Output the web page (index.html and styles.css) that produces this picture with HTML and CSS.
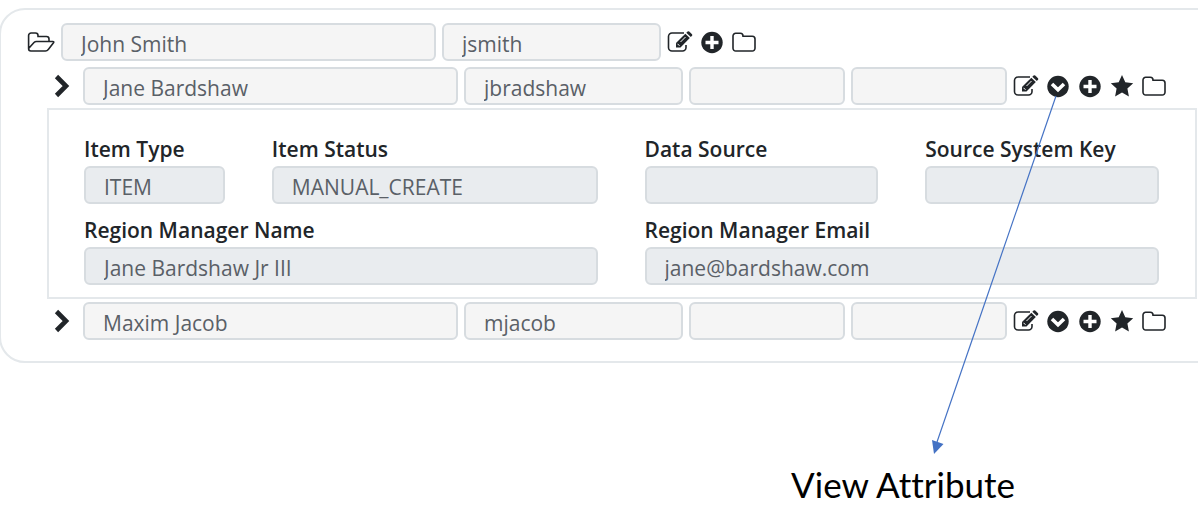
FILE: index.html
```html
<!DOCTYPE html>
<html lang="en">
<head>
    <meta charset="UTF-8">
    <meta name="viewport" content="width=device-width, initial-scale=1.0">
    <title>Item Hierarchy</title>
    <link rel="stylesheet" href="styles.css">
</head>
<body>
    <svg class="sprite" aria-hidden="true">
        <symbol id="edit" viewBox="0 0 26 24">
            <path d="M17 3H5a3.500 3.500 0 0 0-3.500 3.500v11A3.500 3.500 0 0 0 5 21h10.500a3.500 3.500 0 0 0 3.500-3.500V15" fill="none" stroke="currentColor" stroke-width="1.600"/>
            <path d="M9 17.500v-4.500L18.300 3.800l4.500 4.300-9.300 9.400z" fill="currentColor"/>
            <path d="M19.300 2.800l1.300-1.200q.8-.7 1.600 0l2.800 2.600q.7.800 0 1.600L23.800 7.100z" fill="currentColor"/>
            <path d="M10.500 13.800l2 2M13.500 12l5-5" fill="none" stroke="#fff" stroke-width="1"/>
        </symbol>
        <symbol id="plus" viewBox="0 0 26 24">
            <circle cx="13" cy="12.500" r="10.700" fill="currentColor"/>
            <path d="M13 6v13M6.500 12.500h13" stroke="#fff" stroke-width="3.400"/>
        </symbol>
        <symbol id="down" viewBox="0 0 26 24">
            <circle cx="13" cy="12.500" r="10.700" fill="currentColor"/>
            <path d="M7 10l6 5.800 6-5.800" fill="none" stroke="#fff" stroke-width="3.600"/>
        </symbol>
        <symbol id="star" viewBox="0 0 26 24">
            <path d="M13 1l3.300 7.200 7.900 1-5.800 5.400 1.500 7.900-6.900-3.900-6.900 3.900 1.500-7.900L1.800 9.200l7.900-1z" fill="currentColor"/>
        </symbol>
        <symbol id="folder" viewBox="0 0 26 24">
            <path d="M2 6a2.700 2.700 0 0 1 2.700-2.700h4.600A2.700 2.700 0 0 1 12 6v.3h9.300A2.700 2.700 0 0 1 24 9v9.300a2.700 2.700 0 0 1-2.700 2.700H4.700A2.700 2.700 0 0 1 2 18.300z" fill="none" stroke="currentColor" stroke-width="1.600"/>
        </symbol>
        <symbol id="folder-open" viewBox="0 0 28 24">
            <path d="M1.600 18.500V5.500a2.500 2.500 0 0 1 2.500-2.500h4.400A2.500 2.500 0 0 1 11 5.500V6.500h8.500A2.500 2.500 0 0 1 22 9v2.500M1.600 18.500l5.400-6q1-1 2.400-1h16.400q1.600 0 .7 1.300l-5.200 6.700q-1.200 1.500-2.800 1.500H3.800q-2.200 0-2.200-2.500z" fill="none" stroke="currentColor" stroke-width="1.600"/>
        </symbol>
        <symbol id="chevron" viewBox="0 0 16 24">
            <path d="M2.500 2.500l9.500 9.500-9.500 9.500" fill="none" stroke="currentColor" stroke-width="4.600"/>
        </symbol>
    </svg>

    <main class="page">
        <section class="card">
            <div class="row row-root">
                <button class="toggle" aria-label="Collapse"><svg class="icon-open"><use href="#folder-open"/></svg></button>
                <div class="fields">
                    <input class="field" type="text" value="John Smith" aria-label="Name" readonly>
                    <input class="field" type="text" value="jsmith" aria-label="Key" readonly>
                    <div class="actions">
                        <button aria-label="Edit"><svg><use href="#edit"/></svg></button>
                        <button aria-label="Add"><svg><use href="#plus"/></svg></button>
                        <button aria-label="Folder"><svg><use href="#folder"/></svg></button>
                    </div>
                </div>
            </div>

            <div class="row">
                <button class="toggle" aria-label="Expand"><svg class="icon-chevron"><use href="#chevron"/></svg></button>
                <div class="fields">
                    <input class="field" type="text" value="Jane Bardshaw" aria-label="Name" readonly>
                    <input class="field" type="text" value="jbradshaw" aria-label="Key" readonly>
                    <input class="field" type="text" aria-label="Value 1" readonly>
                    <input class="field" type="text" aria-label="Value 2" readonly>
                    <div class="actions">
                        <button aria-label="Edit"><svg><use href="#edit"/></svg></button>
                        <button aria-label="View Attribute"><svg><use href="#down"/></svg></button>
                        <button aria-label="Add"><svg><use href="#plus"/></svg></button>
                        <button aria-label="Favorite"><svg><use href="#star"/></svg></button>
                        <button aria-label="Folder"><svg><use href="#folder"/></svg></button>
                    </div>
                </div>
            </div>

            <div class="attributes">
                <div class="attribute">
                    <label for="itemType">Item Type</label>
                    <input class="field" type="text" id="itemType" value="ITEM" readonly>
                </div>
                <div class="attribute">
                    <label for="itemStatus">Item Status</label>
                    <input class="field" type="text" id="itemStatus" value="MANUAL_CREATE" readonly>
                </div>
                <div class="attribute">
                    <label for="dataSource">Data Source</label>
                    <input class="field" type="text" id="dataSource" readonly>
                </div>
                <div class="attribute">
                    <label for="sourceKey">Source System Key</label>
                    <input class="field" type="text" id="sourceKey" readonly>
                </div>
                <div class="attribute wide">
                    <label for="managerName">Region Manager Name</label>
                    <input class="field" type="text" id="managerName" value="Jane Bardshaw Jr III" readonly>
                </div>
                <div class="attribute wide">
                    <label for="managerEmail">Region Manager Email</label>
                    <input class="field" type="text" id="managerEmail" value="jane@bardshaw.com" readonly>
                </div>
            </div>

            <div class="row">
                <button class="toggle" aria-label="Expand"><svg class="icon-chevron"><use href="#chevron"/></svg></button>
                <div class="fields">
                    <input class="field" type="text" value="Maxim Jacob" aria-label="Name" readonly>
                    <input class="field" type="text" value="mjacob" aria-label="Key" readonly>
                    <input class="field" type="text" aria-label="Value 1" readonly>
                    <input class="field" type="text" aria-label="Value 2" readonly>
                    <div class="actions">
                        <button aria-label="Edit"><svg><use href="#edit"/></svg></button>
                        <button aria-label="View Attribute"><svg><use href="#down"/></svg></button>
                        <button aria-label="Add"><svg><use href="#plus"/></svg></button>
                        <button aria-label="Favorite"><svg><use href="#star"/></svg></button>
                        <button aria-label="Folder"><svg><use href="#folder"/></svg></button>
                    </div>
                </div>
            </div>
        </section>

        <p class="caption">View Attribute</p>

        <svg class="arrow" viewBox="0 0 128 360" aria-hidden="true">
            <path d="M126 2L7 348" stroke="#4472c4" stroke-width="1.200"/>
            <path d="M2 346l11.500 4L4 360z" fill="#4472c4"/>
        </svg>
    </main>
</body>
</html>
```
FILE: styles.css
```css
* {
    box-sizing: border-box;
}
body {
    margin: 0;
    background: #fff;
    color: #212529;
    font-family: 'Open Sans', 'Noto Sans', sans-serif;
    font-size: 21px;
    overflow-x: hidden;
}
.sprite {
    display: none;
}
.page {
    position: relative;
    padding-top: 8px;
    overflow: hidden;
}
/* the card runs off the right side of the page */
.card {
    display: flex;
    flex-direction: column;
    gap: 3px;
    margin: 0 -33px 0 -1px;
    padding: 13px 32px 21px 26px;
    border: 2px solid #e4e8eb;
    border-radius: 26px;
}
.row {
    display: flex;
    align-items: center;
    padding: 0 30px 0 27px;
}
.row-root {
    padding: 0 52px 3px 0;
}
button {
    display: block;
    padding: 0;
    border: none;
    background: none;
    color: #212529;
    cursor: pointer;
}
.toggle {
    flex: none;
    width: 29px;
}
.row-root .toggle {
    width: 34px;
}
.toggle svg {
    display: block;
    height: 24px;
}
.icon-open {
    width: 28px;
}
.icon-chevron {
    width: 16px;
}
.fields {
    flex: 1;
    display: grid;
    grid-template-columns: 375fr 219fr 156fr 156fr 154px;
    gap: 6px;
    align-items: center;
}
.field {
    width: 100%;
    min-width: 0;
    height: 38px;
    padding: 3px 18px 0;
    border: 2px solid #d7dce0;
    border-radius: 6px;
    background: #f5f5f5;
    color: #5a6067;
    font: inherit;
}
.actions {
    display: flex;
    gap: 6px;
}
.actions svg {
    display: block;
    width: 26px;
    height: 24px;
}
.row-root .actions {
    grid-column: span 3;
}
.attributes {
    display: grid;
    grid-template-columns: 141fr 326fr 234fr 234fr;
    gap: 12px 47px;
    margin-left: 20px;
    padding: 25px 36px 12px 35px;
    border: 2px solid #e4e8eb;
}
.attribute {
    min-width: 0;
}
.attribute.wide {
    grid-column: span 2;
}
.attribute label {
    display: block;
    margin-bottom: 3px;
    line-height: 28px;
    font-weight: 600;
    white-space: nowrap;
}
.attribute .field {
    display: block;
    background: #e9ecef;
}
.caption {
    margin: 97px 183px 0 0;
    color: #000;
    font-family: Lato, sans-serif;
    font-size: 35px;
    font-variant-ligatures: none;
    line-height: 48px;
    text-align: right;
}
.arrow {
    position: absolute;
    top: 94px;
    right: 140px;
    width: 128px;
    height: 360px;
}
```
